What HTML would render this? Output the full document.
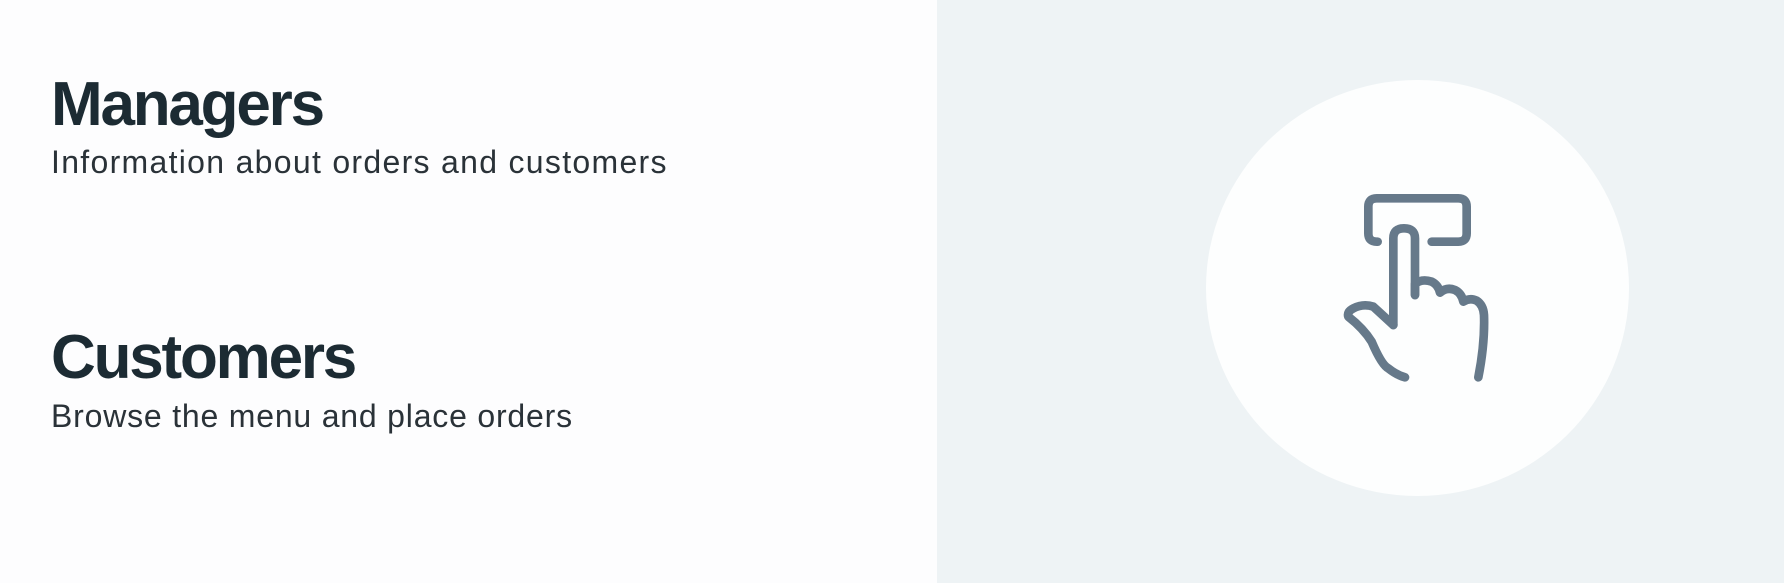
<!DOCTYPE html>
<html><head><style>
html,body{margin:0;padding:0;}
body{width:1784px;height:583px;position:relative;overflow:hidden;background:#fdfdfe;font-family:"Liberation Sans",sans-serif;color:#1c2b33;}
.right{position:absolute;left:937px;top:0;width:847px;height:583px;background:#eef3f5;}
.circle{position:absolute;left:1206px;top:80px;width:423px;height:416px;border-radius:50%;background:#fdfefe;}
.h{position:absolute;left:51px;font-weight:bold;font-size:62px;letter-spacing:-2.2px;transform-origin:left top;white-space:nowrap;}
.s{position:absolute;left:51px;font-size:32px;letter-spacing:1.3px;white-space:nowrap;color:#2a3238;}
</style></head><body>
<div class="h" style="top:69px;">Managers</div>
<div class="s" style="top:144px;">Information about orders and customers</div>
<div class="h" style="top:322px;">Customers</div>
<div class="s" style="top:398px;letter-spacing:0.8px;">Browse the menu and place orders</div>
<div class="right"></div>
<div class="circle"></div>
<svg style="position:absolute;left:1200px;top:60px" width="450" height="450" viewBox="0 0 1350 1350" fill="none" stroke="#66798a" stroke-width="26" stroke-linecap="round" stroke-linejoin="round">
<path d="M533 545 H530 Q505 545 505 520 V440 Q505 415 530 415 H775 Q800 415 800 440 V520 Q800 545 775 545 H695"/>
<path d="M580 795 V535 Q580 505 612 505 Q645 505 645 535 V705"/>
<path d="M645 705 V672 Q665 655 695 665 Q715 675 720 698 Q740 680 765 690 Q785 700 790 725 Q810 712 830 722 Q850 735 852 765 Q855 850 835 952"/>
<path d="M580 795 L520 740 Q490 730 460 745 Q440 755 445 770 Q490 805 515 845 Q545 915 565 925 Q590 945 615 952"/>
</svg>
</body></html>
